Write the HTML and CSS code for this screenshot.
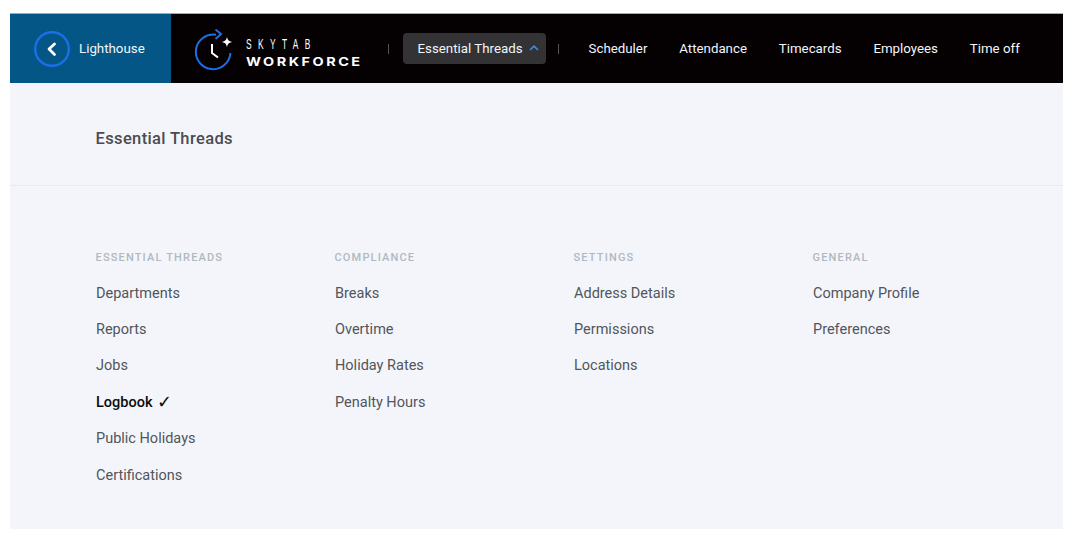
FILE: index.html
```html
<!DOCTYPE html>
<html lang="en">
<head>
<meta charset="utf-8">
<title>Essential Threads</title>
<link rel="stylesheet" href="styles.css">
</head>
<body>
<div class="frame">
  <header class="topbar">
    <a class="back">
      <svg class="back-icon" width="36" height="36" viewBox="0 0 36 36" fill="none">
        <circle cx="18" cy="18" r="16.800" stroke="#1a6fe8" stroke-width="2.400"/>
        <path d="M20.500 13 15 18l5.500 5.500" stroke="#fff" stroke-width="2.800" stroke-linecap="round" stroke-linejoin="round"/>
      </svg>
      <span>Lighthouse</span>
    </a>
    <div class="brandnav">
      <div class="logo">
        <svg class="logo-icon" width="40" height="44" viewBox="0 0 40 44" fill="none">
          <path d="M21 6.800A17.300 17.300 0 1 0 35.400 25" stroke="#1a6fe8" stroke-width="2"/>
          <path d="M20.500 1.500 26 6 20.500 11" stroke="#1a6fe8" stroke-width="2"/>
          <path d="M17 16V25L23 29.500" stroke="#fff" stroke-width="2"/>
          <path d="M32 8.500C32.500 12 33.500 13.300 37.500 14 33.500 14.700 32.500 16 32 19.500 31.500 16 30.500 14.700 26.500 14 30.500 13.300 31.500 12 32 8.500Z" fill="#fff"/>
        </svg>
        <div class="logo-text">
          <span class="logo-top">SKYTAB</span>
          <span class="logo-bottom">WORKFORCE</span>
        </div>
      </div>
      <nav class="nav">
        <i class="sep"></i>
        <a class="nav-active">Essential Threads
          <svg width="10" height="6" viewBox="0 0 10 6" fill="none"><path d="M1 5 5 1.200 9 5" stroke="#3d8be8" stroke-width="1.600"/></svg>
        </a>
        <i class="sep"></i>
        <a class="nav-link">Scheduler</a>
        <a class="nav-link">Attendance</a>
        <a class="nav-link">Timecards</a>
        <a class="nav-link">Employees</a>
        <a class="nav-link">Time off</a>
      </nav>
    </div>
  </header>
  <main class="content">
    <section class="title-row"><h1>Essential Threads</h1></section>
    <section class="columns">
      <div class="col">
        <h2>ESSENTIAL THREADS</h2>
        <a>Departments</a>
        <a>Reports</a>
        <a>Jobs</a>
        <a class="current">Logbook <span class="check">✓</span></a>
        <a>Public Holidays</a>
        <a>Certifications</a>
      </div>
      <div class="col">
        <h2>COMPLIANCE</h2>
        <a>Breaks</a>
        <a>Overtime</a>
        <a>Holiday Rates</a>
        <a>Penalty Hours</a>
      </div>
      <div class="col">
        <h2>SETTINGS</h2>
        <a>Address Details</a>
        <a>Permissions</a>
        <a>Locations</a>
      </div>
      <div class="col">
        <h2>GENERAL</h2>
        <a>Company Profile</a>
        <a>Preferences</a>
      </div>
    </section>
  </main>
</div>
</body>
</html>
```

FILE: styles.css
```css
* { box-sizing: border-box; }
html, body { height: 100%; }
body {
  margin: 0;
  padding: 13px 11px 10px 10px;
  background: #fff;
  font-family: Roboto, "Liberation Sans", sans-serif;
}
.frame {
  height: 516px;
  display: flex;
  flex-direction: column;
  background: #f4f5fa;
}
.topbar {
  height: 70px;
  display: flex;
  background: #050103;
  border-top: 1px solid #a9a9a9;
  flex: none;
}
.back {
  width: 161px;
  display: flex;
  align-items: center;
  gap: 9px;
  padding-left: 24px;
  background: #035685;
  color: #f2f6fa;
  font-size: 13.300px;
}
.back span { padding-bottom: 1px; }
.brandnav {
  flex: 1;
  display: flex;
  align-items: center;
  padding-left: 24px;
}
.logo {
  display: flex;
  align-items: center;
  gap: 11px;
}
.logo-icon { margin-top: 2px; }
.logo-text {
  width: 115px;
  margin-top: 8px;
  white-space: nowrap;
  display: flex;
  flex-direction: column;
  color: #fff;
  gap: 6px;
}
.logo-top {
  font-family: "Liberation Sans", sans-serif;
  font-size: 14px;
  line-height: 12px;
  letter-spacing: 10.600px;
  transform-origin: left center;
  transform: scaleX(.6);
}
.logo-bottom {
  font-family: Inter, sans-serif;
  font-weight: 700;
  font-size: 12px;
  line-height: 12px;
  letter-spacing: 2.100px;
  transform-origin: left center;
  transform: scaleX(1.2);
}
.nav {
  display: flex;
  align-items: center;
  margin-left: 27px;
  font-size: 13.300px;
  color: #f2f6fa;
}
.sep {
  width: 1px;
  height: 10px;
  background: #555;
}
.nav-active {
  display: flex;
  align-items: center;
  gap: 6px;
  height: 31px;
  margin: 0 12.500px 0 14px;
  padding: 0 7px 1px 14.500px;
  background: #333335;
  border-radius: 4px;
}
.nav-link { margin-left: 31.800px; padding-bottom: 1px; }
.sep + .nav-link { margin-left: 29.500px; }
.content { flex: 1; }
.title-row {
  height: 103px;
  padding: 45px 0 0 85.500px;
  border-bottom: 1px solid #e8e9ee;
}
h1 {
  margin: 0;
  font-size: 16.500px;
  line-height: 21px;
  font-weight: 500;
  letter-spacing: .36px;
  color: #4a4c50;
}
.columns {
  display: flex;
  padding: 65px 0 0 85.500px;
}
.col {
  width: 239px;
  display: flex;
  flex-direction: column;
  font-size: 14.500px;
  color: #50565c;
}
.col h2 {
  margin: 0 0 17.600px;
  font-size: 11px;
  line-height: 14px;
  font-weight: 500;
  letter-spacing: 1.170px;
  color: #aeb9c2;
}
.col a {
  height: 36.400px;
  line-height: 22px;
  padding-left: .5px;
}
.col .current {
  color: #0b0b0d;
  font-weight: 500;
}
.check {
  margin-left: 1px;
  font-family: "DejaVu Sans", sans-serif;
  font-weight: 400;
  font-size: 18px;
  line-height: 18px;
  vertical-align: -1px;
}
```
